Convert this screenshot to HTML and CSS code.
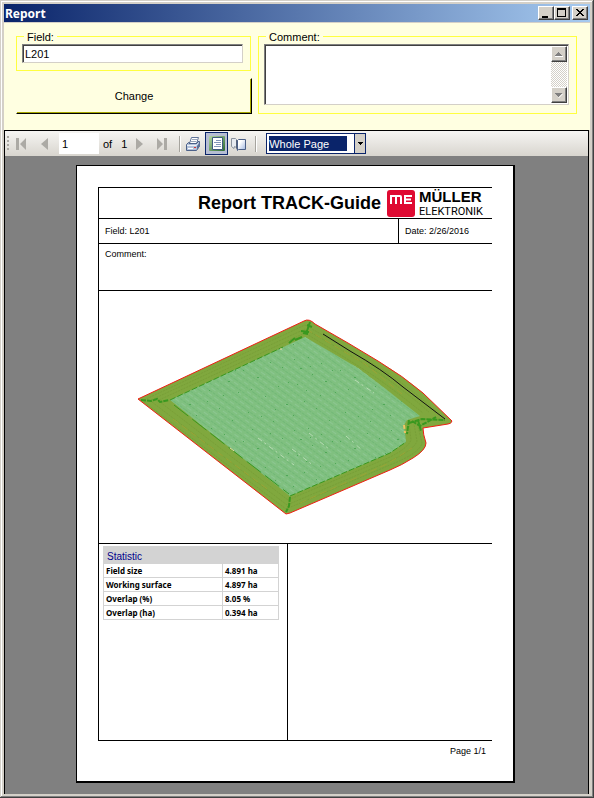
FILE: index.html
```html
<!DOCTYPE html>
<html lang="en">
<head>
  <meta charset="UTF-8">
  <title>Report</title>
  <link rel="stylesheet" href="styles.css">
</head>
<body>
  <div class="window">
    <header class="titlebar">
      <h1>Report</h1>
      <button type="button" class="win-btn" aria-label="Minimize">
        <svg width="12" height="10"><path d="M2 8h6v2h-6z"/></svg>
      </button>
      <button type="button" class="win-btn" aria-label="Maximize">
        <svg width="12" height="10"><path fill-rule="evenodd" d="M1 0h9v9h-9zM2 2v6h7v-6z"/></svg>
      </button>
      <button type="button" class="win-btn close" aria-label="Close">
        <svg width="12" height="10"><path d="M2 1h2v1h1v1h2v-1h1v-1h2v1h-1v1h-1v1h-1v1h1v1h1v1h1v1h-2v-1h-1v-1h-2v1h-1v1h-2v-1h1v-1h1v-1h1v-1h-1v-1h-1v-1h-1z"/></svg>
      </button>
    </header>

    <form class="details">
      <div class="left">
        <fieldset>
          <legend><label for="field">Field:</label></legend>
          <input type="text" id="field" value="L201">
        </fieldset>
        <button type="button" class="change">Change</button>
      </div>
      <fieldset class="comment">
        <legend><label for="comment">Comment:</label></legend>
        <div class="memo">
          <textarea id="comment"></textarea>
          <div class="scrollbar">
            <button type="button" aria-label="Scroll up">
              <svg width="9" height="6"><path fill="#fff" d="M1 5h8v1h-8z"/><path fill="#808080" d="M4 1h1v1h1v1h1v1h1v1h-7v-1h1v-1h1v-1h1z"/></svg>
            </button>
            <button type="button" aria-label="Scroll down">
              <svg width="9" height="6"><path fill="#fff" d="M8 2h1l-4 4h-1z"/><path fill="#808080" d="M1 1h7v1h-1v1h-1v1h-1v1h-1v-1h-1v-1h-1v-1h-1z"/></svg>
            </button>
          </div>
        </div>
      </fieldset>
    </form>

    <main class="viewer">
      <div class="toolbar">
        <span class="grip"></span>
        <button type="button" class="tool" aria-label="First page">
          <svg width="16" height="16" class="nav"><path d="M2 2h3v12h-3zM12 2v12l-6-6z"/></svg>
        </button>
        <button type="button" class="tool" aria-label="Previous page">
          <svg width="16" height="16" class="nav"><path d="M11 2v12l-7-6z"/></svg>
        </button>
        <input type="text" class="page-no" value="1" aria-label="Page number">
        <span class="of">of</span>
        <span class="total">1</span>
        <button type="button" class="tool" aria-label="Next page">
          <svg width="16" height="16" class="nav"><path d="M4 2v12l7-6z"/></svg>
        </button>
        <button type="button" class="tool" aria-label="Last page">
          <svg width="16" height="16" class="nav"><path d="M2 2v12l6-6zM9 2h3v12h-3z"/></svg>
        </button>
        <span class="sep"></span>
        <button type="button" class="tool" aria-label="Print">
          <svg width="16" height="16">
            <path fill="#fff" stroke="#5f7399" d="M6.500 1.500h7l-2 6h-7z"/>
            <path stroke="#9aa6ba" d="M7 3.500h5M6 5.500h5"/>
            <path fill="#b4c2da" stroke="#4c6189" d="M1.500 8.500l2-2h1l-.5 1h8l1-2h1.500v4.500l-3 4.500h-10z"/>
            <path fill="#eef2f8" d="M2 9h9l2-2v1l-2 2h-9z"/>
            <path fill="#5b7099" d="M12 10l3-4v4l-3 4z"/>
            <path fill="#fff" d="M3 12h5v1h-5z"/>
            <path fill="#d33" d="M9 11h2v1h-2z"/>
          </svg>
        </button>
        <button type="button" class="tool active" aria-label="Print layout" aria-pressed="true">
          <svg width="17" height="17">
            <defs>
              <linearGradient id="leaf" x1="0" y1="0" x2="1" y2="1"><stop stop-color="#b4d6a2"/><stop offset="1" stop-color="#2c6b31"/></linearGradient>
            </defs>
            <rect x="1" y="1" width="16" height="15" rx="1" fill="url(#leaf)"/>
            <path fill="#fff" stroke="#3f5a7d" d="M4.500 2.500h10v12h-10z"/>
            <path stroke="#8296b8" d="M8 5.500h5M6 7.500h7M8 9.500h5M6 11.500h7"/>
          </svg>
        </button>
        <button type="button" class="tool" aria-label="Page setup">
          <svg width="16" height="16">
            <defs>
              <linearGradient id="sky" x1="0" y1="0" x2="1" y2="1"><stop offset=".3" stop-color="#fff"/><stop offset="1" stop-color="#9db4e0"/></linearGradient>
            </defs>
            <path fill="#e6eaf0" stroke="#8a929e" d="M.5 2.500h4l1 1v8l-2-1-.5 2-2.500-2z"/>
            <path fill="#55627a" d="M5 4h2v10h-1l-1-2z"/>
            <path fill="url(#sky)" stroke="#4b5f86" d="M6.500 4.500l1-1h7v10h-7l-1 1z"/>
          </svg>
        </button>
        <span class="sep"></span>
        <span class="zoom">
          <select aria-label="Zoom">
            <option>Whole Page</option>
            <option>Page Width</option>
            <option>100%</option>
          </select>
          <svg class="arrow" width="11" height="19" aria-hidden="true"><path d="M3 8h5v1h-1v1h-1v1h-1v-1h-1v-1h-1z"/></svg>
        </span>
      </div>

      <article class="page">
        <div class="sheet">
          <div class="head">
            <h2>Report TRACK-Guide</h2>
            <div class="logo">
              <svg class="mark" width="28" height="27" aria-hidden="true">
                <rect width="28" height="27" rx="3" fill="#df0a32"/>
                <path fill="none" stroke="#fff" stroke-width="2" d="M4 14V6h9q1 0 1 1v7M9 6v8M25 6h-7v7h7M18 9.500h6"/>
              </svg>
              <div class="brand"><b>MÜLLER</b><span>ELEKTRONIK</span></div>
            </div>
          </div>
          <div class="info">
            <div class="field-cell">Field: L201</div>
            <div class="date-cell">Date: 2/26/2016</div>
          </div>
          <div class="remark">Comment:</div>
          <div class="map">
            <svg viewBox="99 291 393 252" role="img" aria-label="Field map">
              <defs>
                <clipPath id="outer"><path d="M138 399L304 321Q309 318 315 324L348 343L378 361Q403 376 423 393L452 421Q451 424 448 424L423 428Q423 434 426 443Q426 450 413 458Q402 465 390 470L290 513L286 514Z"/></clipPath>
                <clipPath id="inner"><path d="M170 400L305 337L358 368L387 390L420 416L407 420L404 425L406 442L390 453L290 496Z"/></clipPath>
                <!-- driven tracks and overlap spots -->
                <pattern id="tracks" width="23" height="6" patternUnits="userSpaceOnUse" patternTransform="rotate(36)">
                  <path stroke="#72b877" stroke-dasharray="3 1" d="M0 .5h23"/>
                  <path stroke="#8cc692" stroke-dasharray="5 3" d="M0 3.500h23"/>
                </pattern>
                <pattern id="spots" width="97" height="71" patternUnits="userSpaceOnUse">
                  <path fill="#50a858" d="M3 4h1v1h-1zM9 13h2v1h-2zM17 2h1v1h-1zM21 19h1v1h-1zM30 8h1v1h-1zM34 26h2v1h-2zM6 29h1v1h-1zM13 46h1v1h-1zM25 53h1v1h-1zM41 15h1v1h-1zM44 37h1v1h-1zM58 3h1v1h-1zM19 11h1v1h-1zM2 60h1v1h-1zM49 15h1v1h-1zM15 35h1v1h-1zM63 22h2v1h-2zM71 41h1v1h-1zM88 12h1v1h-1zM79 66h1v1h-1zM54 57h1v1h-1zM92 49h2v1h-2zM67 61h1v1h-1zM76 7h1v1h-1zM84 31h1v1h-1zM38 65h1v1h-1zM57 34h1v1h-1zM81 54h1v1h-1zM29 40h1v1h-1zM94 27h1v1h-1z"/>
                </pattern>
              </defs>
              <g clip-path="url(#outer)">
                <path fill="#80a83e" d="M130 310h330v210h-330z"/>
                <g fill="none" stroke="#789f38" stroke-dasharray="2 1">
                  <path d="M144 400L305 325L347 349L378 367Q400 380 436 411"/>
                  <path d="M151 400L305 329L345 352L376 371Q400 387 429 412"/>
                  <path d="M159 400L305 333L344 357L374 376Q398 393 423 413"/>
                  <path d="M144 402L286 509L390 465Q420 453 422 443L418 426"/>
                  <path d="M152 402L287 505L390 461Q414 450 417 441L414 424"/>
                  <path d="M160 402L288 500L390 457Q408 448 411 440L409 423"/>
                </g>
                <path fill="none" stroke="#9aa337" stroke-dasharray="7 4" d="M300 503L387 464L412 448M306 329L365 364L402 394M173 419L270 491"/>
              </g>
              <g clip-path="url(#inner)">
                <path fill="#80c080" d="M160 330h270v180h-270z"/>
                <path fill="url(#tracks)" d="M160 330h270v180h-270z"/>
                <path fill="url(#spots)" d="M160 330h270v180h-270z"/>
                <path stroke="#b9dcb5" stroke-dasharray="5 3 2 4" d="M258 438L294 465M309 433L329 449M346 436L362 450M355 380L374 393M292 449L314 466"/>
              </g>
              <g fill="none" stroke="#39981f">
                <path d="M174 405L232 450L289 494" stroke-dasharray="18 5"/>
                <path d="M290 496L390 453L406 442M170 400L283 347" stroke-dasharray="6 2"/>
                <path stroke-width="2" d="M141 400L151 401L157 399L160 402L169 400M290 497L289 506L286 512M409 423L422 419L445 420M418 420L421 431M409 420L407 434M412 421L420 426L436 417" stroke-dasharray="5 1"/>
                <path stroke-width="2" d="M310 322L307 331M289 343L295 338M301 331L309 332M303 333L308 334M295 340L302 337M307 325L312 327"/>
              </g>
              <path fill="none" stroke="#efc265" stroke-width="2" stroke-dasharray="4 2" d="M404 425L405 433"/>
              <path fill="none" stroke="#efdba0" d="M230 448l4 3M280 349h2"/>
              <path fill="none" stroke="#111" d="M323 334L350 351Q383 370 403 387L445 419"/>
              <path fill="none" stroke="#f01e14" d="M138 399L304 321Q309 318 315 324L348 343L378 361Q403 376 423 393L452 421Q451 424 448 424L423 428Q423 434 426 443Q426 450 413 458Q402 465 390 470L290 513L286 514Z"/>
            </svg>
          </div>
          <div class="bottom">
            <div class="stats">
              <table>
                <caption>Statistic</caption>
                <tr><th scope="row">Field size</th><td>4.891 ha</td></tr>
                <tr><th scope="row">Working surface</th><td>4.897 ha</td></tr>
                <tr><th scope="row">Overlap (%)</th><td>8.05 %</td></tr>
                <tr><th scope="row">Overlap (ha)</th><td>0.394 ha</td></tr>
              </table>
            </div>
            <div class="empty"></div>
          </div>
        </div>
        <footer>Page 1/1</footer>
      </article>
    </main>
  </div>
</body>
</html>
```
FILE: styles.css
```css
* {
  box-sizing: border-box;
}
body {
  margin: 0;
  font-family: "Liberation Sans", Arial, sans-serif;
  font-size: 11px;
  color: #000;
}
button, input, select, textarea {
  font: inherit;
  color: inherit;
  margin: 0;
  border-radius: 0;
}
svg {
  display: block;
}
.window {
  display: flex;
  flex-direction: column;
  min-height: 100vh;
  padding: 4px;
  background: #d4d0c8;
  box-shadow: inset -1px -1px #404040, inset 1px 1px #d4d0c8, inset -2px -2px #808080, inset 2px 2px #fff;
}

/* title bar */
.titlebar {
  display: flex;
  align-items: center;
  height: 18px;
  padding: 0 2px 0 1px;
  background: linear-gradient(to right, #0a246a, #a6caf0);
}
.titlebar h1 {
  flex: 1;
  margin: 0;
  font: bold 12px "Noto Sans", sans-serif;
  color: #fff;
}
.win-btn {
  width: 16px;
  height: 14px;
  padding: 1px;
  border: 1px solid;
  border-color: #fff #404040 #404040 #fff;
  background: #d4d0c8;
  box-shadow: inset -1px -1px #808080;
}
.close {
  margin-left: 2px;
}

/* field and comment form */
.details {
  display: grid;
  grid-template-columns: 236fr 319fr;
  gap: 6px;
  margin-top: 1px;
  padding: 7px 13px 16px 12px;
  background: #ffffe1;
}
.left {
  display: flex;
  flex-direction: column;
  gap: 7px;
}
fieldset {
  min-width: 0;
  margin: 0 1px 0 0;
  padding: 1px 7px 7px 5px;
  border: 1px solid #ffff40;
}
legend {
  height: 13px;
  margin-left: 2px;
  padding: 0 3px;
  line-height: 15px;
}
#field {
  display: block;
  width: 100%;
  height: 19px;
  padding: 0 2px;
  border: 1px solid;
  border-color: #808080 #d4d0c8 #d4d0c8 #808080;
  background: #fff;
  box-shadow: inset 1px 1px #404040;
}
.change {
  height: 36px;
  border: 1px solid;
  border-color: #ffffe1 #000 #000 #ffffe1;
  background: #ffffe1;
  box-shadow: inset -1px -1px #a8a800;
}
.comment {
  margin: 0;
}
.memo {
  display: flex;
  height: 61px;
  padding: 1px;
  border: 1px solid;
  border-color: #808080 #d4d0c8 #d4d0c8 #808080;
  background: #fff;
  box-shadow: inset 1px 1px #404040;
}
.memo textarea {
  flex: 1;
  min-width: 0;
  border: 0;
  resize: none;
  background: transparent;
}
.scrollbar {
  display: flex;
  flex-direction: column;
  justify-content: space-between;
  width: 16px;
  background: repeating-conic-gradient(#d4d0c8 0 25%, #fff 0 50%) 0 0 / 2px 2px;
}
.scrollbar button {
  height: 16px;
  padding: 0 0 0 2px;
  border: 1px solid;
  border-color: #fff #404040 #404040 #fff;
  background: #d4d0c8;
  box-shadow: inset -1px -1px #808080;
}

/* report viewer */
.viewer {
  flex: 1;
  display: flex;
  flex-direction: column;
  margin-right: 1px;
  padding-bottom: 11px;
  border: solid #000;
  border-width: 1px 1px 0 1px;
  background: #808080;
}
.toolbar {
  display: flex;
  align-items: center;
  height: 25px;
  padding-left: 2px;
  background: linear-gradient(#f6f5f3, #d8d5ce);
}
.grip {
  width: 2px;
  height: 15px;
  margin-right: 2px;
  background: repeating-linear-gradient(#aaa8a2 0 2px, transparent 2px 4px);
}
.tool {
  width: 23px;
  height: 23px;
  padding: 0 3px;
  border: 0;
  background: none;
}
.nav {
  fill: #acaaa5;
}
.tool.active {
  padding: 0 2px;
  border: 1px solid #0a246a;
  background: #b6bdd2;
}
.page-no {
  width: 40px;
  height: 21px;
  margin-left: 2px;
  padding: 0 3px;
  border: 0;
  background: #fff;
}
.of {
  margin: 0 9px 0 4px;
}
.total {
  width: 8px;
}
.sep {
  width: 2px;
  height: 16px;
  margin: 0 1px 0 4px;
  border-left: 1px solid #a6a49e;
  border-right: 1px solid #fff;
}
.zoom {
  position: relative;
  margin-left: 8px;
}
.zoom select {
  display: block;
  width: 100px;
  height: 21px;
  padding: 2px 18px 2px 2px;
  border: 1px solid #0a246a;
  appearance: none;
  color: #fff;
  background: linear-gradient(#0a246a, #0a246a) content-box, #fff;
}
.zoom option {
  color: #000;
}
.arrow {
  position: absolute;
  top: 1px;
  right: 1px;
  border-left: 1px solid #0a246a;
  background: #d4d0c8;
  pointer-events: none;
}

/* paper */
.page {
  flex: 1;
  display: flex;
  flex-direction: column;
  margin: 9px 73px 0 71px;
  padding: 21px 21px 0;
  border: solid #000;
  border-width: 1px 2px 2px 1px;
  background: #fff;
  font-size: 9px;
}
.sheet {
  flex: 1;
  display: flex;
  flex-direction: column;
  border: solid #000;
  border-width: 1px 0 1px 1px;
}
.head {
  display: flex;
  justify-content: flex-end;
  align-items: center;
  gap: 6px;
  height: 31px;
  padding-right: 9px;
  border-bottom: 1px solid #000;
}
.head h2 {
  margin: 0;
  font-size: 18px;
}
.logo {
  display: flex;
  align-items: center;
  gap: 4px;
}
.brand b {
  display: block;
  font: bold 15px/16px "Liberation Sans", Arial, sans-serif;
}
.brand span {
  display: block;
  font: 11px/13px "Roboto", sans-serif;
}
.info {
  display: grid;
  grid-template-columns: 299fr 94fr;
  border-bottom: 1px solid #000;
  line-height: 24px;
}
.field-cell {
  padding-left: 6px;
}
.date-cell {
  padding-left: 6px;
  border-left: 1px solid #000;
}
.remark {
  height: 47px;
  padding: 5px 6px;
  border-bottom: 1px solid #000;
}
.map svg {
  width: 100%;
}
.bottom {
  flex: 1;
  display: grid;
  grid-template-columns: 188fr 205fr;
  border-top: 1px solid #000;
}
.stats {
  padding: 2px 8px 0 4px;
}
.empty {
  border-left: 1px solid #000;
}
table {
  width: 100%;
  border-collapse: collapse;
  font: bold 8px "Noto Sans", sans-serif;
}
caption {
  height: 17px;
  padding: 3px 4px 0;
  background: #d3d3d3;
  color: #00008b;
  font: 10px/16px "Liberation Sans", Arial, sans-serif;
  text-align: left;
}
th, td {
  height: 14px;
  padding: 0 2px;
  border: 1px solid #d3d3d3;
  text-align: left;
  line-height: 13px;
}
th {
  width: 68%;
}
footer {
  height: 40px;
  padding: 5px 6px;
  text-align: right;
}
```
